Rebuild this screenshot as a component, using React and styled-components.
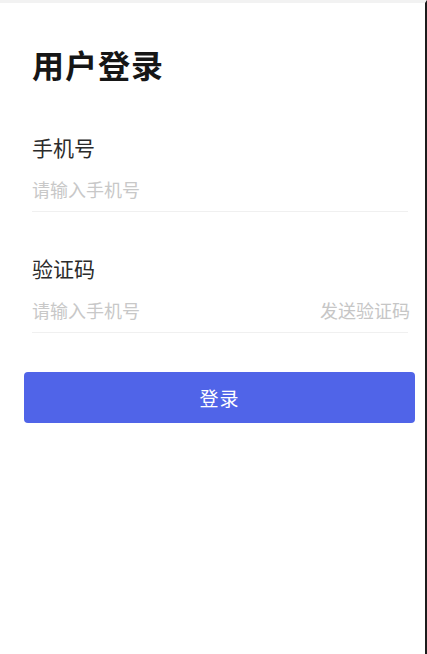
import styled, { createGlobalStyle } from 'styled-components';

const GlobalStyle = createGlobalStyle`
  html, body {
    margin: 0;
    padding: 0;
    background: #ffffff;
  }

  body {
    font-family: "Noto Sans CJK SC", "Noto Sans", sans-serif;
  }
`;

const Page = styled.div`
  box-sizing: border-box;
  width: 427px;
  height: 654px;
  border-top: 3px solid #f2f2f2;
  border-right: 2px solid #1c1c1c;
  padding: 41px 0 0;
  display: flex;
  flex-direction: column;
`;

const Title = styled.h1`
  margin: 0 0 49px 32px;
  font-size: 32px;
  line-height: 40px;
  font-weight: 700;
  color: #161616;
  letter-spacing: 1px;
`;

const Form = styled.form`
  display: flex;
  flex-direction: column;
  gap: 42px;
  padding: 0 17px 0 32px;
`;

const Field = styled.div`
  display: flex;
  flex-direction: column;
  gap: 6px;
`;

const Label = styled.label`
  font-size: 21px;
  line-height: 28px;
  color: #2b2b2b;
`;

const InputRow = styled.div`
  height: 44px;
  display: flex;
  align-items: center;
  border-bottom: 1px solid #f0f0f0;
`;

const Input = styled.input`
  flex: 1;
  min-width: 0;
  border: none;
  outline: none;
  padding: 0;
  background: transparent;
  font-family: inherit;
  font-size: 18px;
  line-height: 24px;
  color: #333;

  &::placeholder {
    color: #c8c8c8;
  }
`;

const SendCode = styled.button`
  border: none;
  background: transparent;
  padding: 0;
  margin-right: -2px;
  font-family: inherit;
  font-size: 18px;
  line-height: 24px;
  color: #c6c6c6;
`;

const LoginButton = styled.button`
  margin: 39px 10px 0 24px;
  height: 51px;
  border: none;
  border-radius: 4px;
  background: #5064e8;
  color: #ffffff;
  font-family: inherit;
  font-size: 19px;
  letter-spacing: 1px;
`;

export default function App() {
  return (
    <>
      <GlobalStyle />
      <Page>
        <Title>用户登录</Title>

        <Form onSubmit={(e) => e.preventDefault()}>
          <Field>
            <Label htmlFor="phone">手机号</Label>
            <InputRow>
              <Input id="phone" placeholder="请输入手机号" />
            </InputRow>
          </Field>

          <Field>
            <Label htmlFor="code">验证码</Label>
            <InputRow>
              <Input id="code" placeholder="请输入手机号" />
              <SendCode type="button">发送验证码</SendCode>
            </InputRow>
          </Field>
        </Form>

        <LoginButton type="button">登录</LoginButton>
      </Page>
    </>
  );
}
